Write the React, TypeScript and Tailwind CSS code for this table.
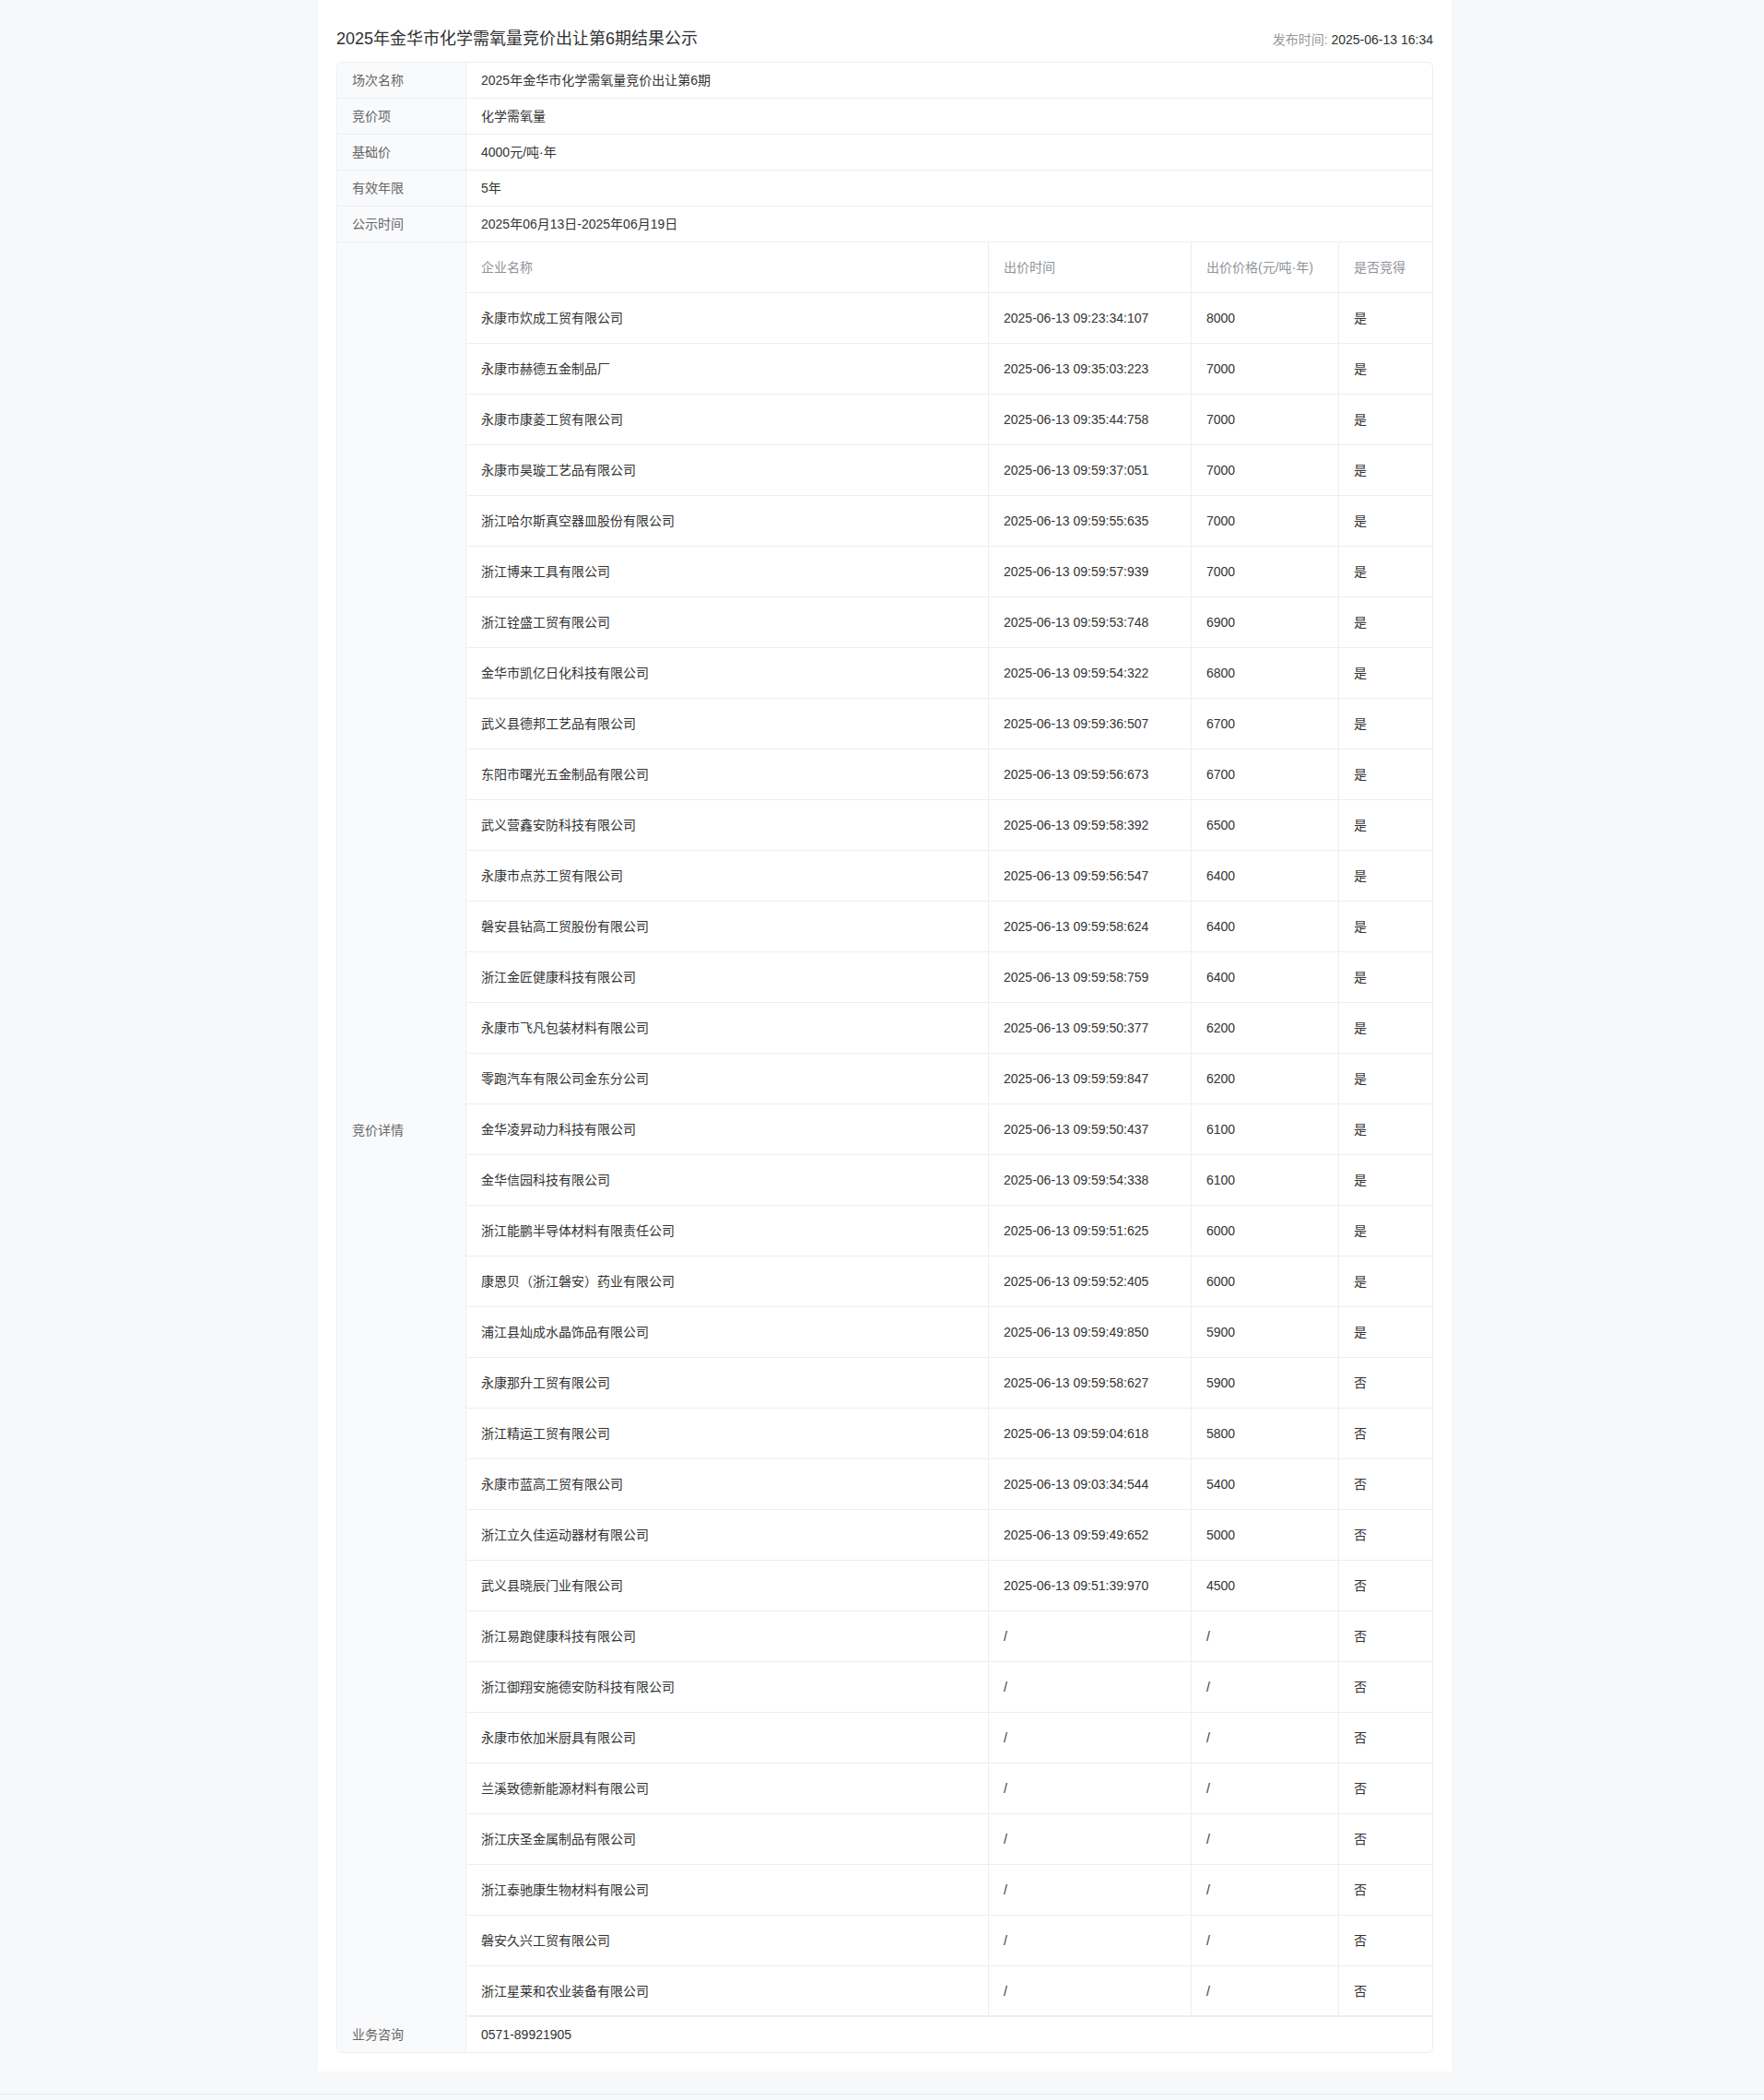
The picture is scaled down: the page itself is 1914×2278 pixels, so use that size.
type Bid = {
  name: string;
  time: string;
  price: string;
  won: boolean;
};

const INFO_ROWS: [string, string][] = [
  ['场次名称', '2025年金华市化学需氧量竞价出让第6期'],
  ['竞价项', '化学需氧量'],
  ['基础价', '4000元/吨·年'],
  ['有效年限', '5年'],
  ['公示时间', '2025年06月13日-2025年06月19日'],
];

const BIDS: Bid[] = [
  { name: '永康市炊成工贸有限公司', time: '2025-06-13 09:23:34:107', price: '8000', won: true },
  { name: '永康市赫德五金制品厂', time: '2025-06-13 09:35:03:223', price: '7000', won: true },
  { name: '永康市康菱工贸有限公司', time: '2025-06-13 09:35:44:758', price: '7000', won: true },
  { name: '永康市昊璇工艺品有限公司', time: '2025-06-13 09:59:37:051', price: '7000', won: true },
  { name: '浙江哈尔斯真空器皿股份有限公司', time: '2025-06-13 09:59:55:635', price: '7000', won: true },
  { name: '浙江博来工具有限公司', time: '2025-06-13 09:59:57:939', price: '7000', won: true },
  { name: '浙江铨盛工贸有限公司', time: '2025-06-13 09:59:53:748', price: '6900', won: true },
  { name: '金华市凯亿日化科技有限公司', time: '2025-06-13 09:59:54:322', price: '6800', won: true },
  { name: '武义县德邦工艺品有限公司', time: '2025-06-13 09:59:36:507', price: '6700', won: true },
  { name: '东阳市曙光五金制品有限公司', time: '2025-06-13 09:59:56:673', price: '6700', won: true },
  { name: '武义营鑫安防科技有限公司', time: '2025-06-13 09:59:58:392', price: '6500', won: true },
  { name: '永康市点苏工贸有限公司', time: '2025-06-13 09:59:56:547', price: '6400', won: true },
  { name: '磐安县钻高工贸股份有限公司', time: '2025-06-13 09:59:58:624', price: '6400', won: true },
  { name: '浙江金匠健康科技有限公司', time: '2025-06-13 09:59:58:759', price: '6400', won: true },
  { name: '永康市飞凡包装材料有限公司', time: '2025-06-13 09:59:50:377', price: '6200', won: true },
  { name: '零跑汽车有限公司金东分公司', time: '2025-06-13 09:59:59:847', price: '6200', won: true },
  { name: '金华凌昇动力科技有限公司', time: '2025-06-13 09:59:50:437', price: '6100', won: true },
  { name: '金华信园科技有限公司', time: '2025-06-13 09:59:54:338', price: '6100', won: true },
  { name: '浙江能鹏半导体材料有限责任公司', time: '2025-06-13 09:59:51:625', price: '6000', won: true },
  { name: '康恩贝（浙江磐安）药业有限公司', time: '2025-06-13 09:59:52:405', price: '6000', won: true },
  { name: '浦江县灿成水晶饰品有限公司', time: '2025-06-13 09:59:49:850', price: '5900', won: true },
  { name: '永康那升工贸有限公司', time: '2025-06-13 09:59:58:627', price: '5900', won: false },
  { name: '浙江精运工贸有限公司', time: '2025-06-13 09:59:04:618', price: '5800', won: false },
  { name: '永康市蓝高工贸有限公司', time: '2025-06-13 09:03:34:544', price: '5400', won: false },
  { name: '浙江立久佳运动器材有限公司', time: '2025-06-13 09:59:49:652', price: '5000', won: false },
  { name: '武义县晓辰门业有限公司', time: '2025-06-13 09:51:39:970', price: '4500', won: false },
  { name: '浙江易跑健康科技有限公司', time: '/', price: '/', won: false },
  { name: '浙江御翔安施德安防科技有限公司', time: '/', price: '/', won: false },
  { name: '永康市依加米厨具有限公司', time: '/', price: '/', won: false },
  { name: '兰溪致德新能源材料有限公司', time: '/', price: '/', won: false },
  { name: '浙江庆圣金属制品有限公司', time: '/', price: '/', won: false },
  { name: '浙江泰驰康生物材料有限公司', time: '/', price: '/', won: false },
  { name: '磐安久兴工贸有限公司', time: '/', price: '/', won: false },
  { name: '浙江星莱和农业装备有限公司', time: '/', price: '/', won: false },
];

const LABEL_CELL =
  'w-[140px] shrink-0 border-r border-[#ebeef5] bg-[#f9fafc] pl-4 text-[#666]';
const BID_GRID = 'grid grid-cols-[567px_220px_160px_1fr]';
const BID_CELL = 'flex items-center pl-4';

const InfoRow = ({ label, value }: { label: string; value: string }) => (
  <div className="flex h-[39px] border-b border-[#ebeef5]">
    <div className={`${LABEL_CELL} flex items-center`}>{label}</div>
    <div className="flex flex-1 items-center pl-4 text-[#333]">{value}</div>
  </div>
);

const BidTable = () => (
  <div className="flex-1">
    <div className={`${BID_GRID} h-[55px] border-b border-[#ebeef5] text-[#909399]`}>
      <div className={`${BID_CELL} border-r border-[#ebeef5]`}>企业名称</div>
      <div className={`${BID_CELL} border-r border-[#ebeef5]`}>出价时间</div>
      <div className={`${BID_CELL} border-r border-[#ebeef5]`}>出价价格(元/吨·年)</div>
      <div className={BID_CELL}>是否竞得</div>
    </div>
    {BIDS.map((bid, i) => (
      <div
        key={bid.name}
        className={`${BID_GRID} h-[55px] border-[#ebeef5] text-[#333] ${
          i === BIDS.length - 1 ? 'border-b-2' : 'border-b'
        }`}
      >
        <div className={`${BID_CELL} border-r border-[#ebeef5]`}>{bid.name}</div>
        <div className={`${BID_CELL} border-r border-[#ebeef5]`}>{bid.time}</div>
        <div className={`${BID_CELL} border-r border-[#ebeef5]`}>{bid.price}</div>
        <div className={BID_CELL}>{bid.won ? '是' : '否'}</div>
      </div>
    ))}
  </div>
);

export default function App() {
  return (
    <div className="min-h-screen bg-[#f7f8fa] font-['Liberation_Sans','Noto_Sans_CJK_SC',sans-serif] text-[14px] leading-[20px]">
      <div className="flex justify-center pl-[6px]">
        <main className="w-[1230px] bg-white px-5 pb-5 pt-[29px]">
          <header className="mb-[11px] flex h-[27px] items-center justify-between">
            <h1 className="text-[18px] leading-[27px] text-[#303133]">
              2025年金华市化学需氧量竞价出让第6期结果公示
            </h1>
            <div className="text-[14px]">
              <span className="text-[#999]">发布时间: </span>
              <span className="text-[#303133]">2025-06-13 16:34</span>
            </div>
          </header>

          <section className="overflow-hidden rounded-md border border-[#ebeef5]">
            {INFO_ROWS.map(([label, value]) => (
              <InfoRow key={label} label={label} value={value} />
            ))}

            <div className="flex">
              <div className={`${LABEL_CELL} flex items-center`}>竞价详情</div>
              <BidTable />
            </div>

            <div className="flex h-[38px]">
              <div className={`${LABEL_CELL} flex items-center`}>业务咨询</div>
              <div className="flex flex-1 items-center pl-4 text-[#333]">0571-89921905</div>
            </div>
          </section>
        </main>
      </div>
      <div className="h-[24px]" />
      <footer className="h-[6px] border-t border-[#e4e7ed] bg-[#f7f8fa]" />
    </div>
  );
}
